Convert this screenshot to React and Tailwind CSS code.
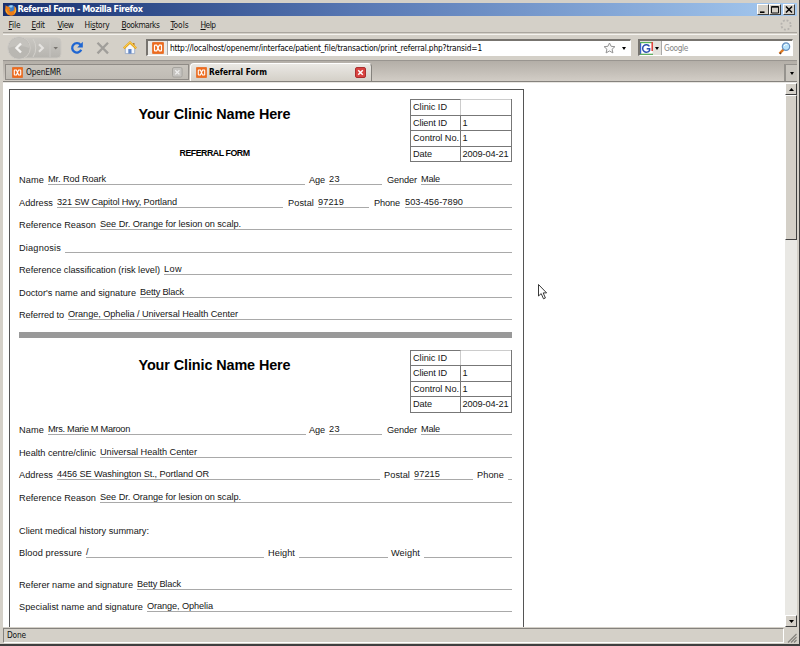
import React, { useLayoutEffect, useRef, useState } from "react";

// Spreads the letters of a text so that it takes the given width.
function Fit({ w, children, className = "" }) {
  const ref = useRef(null);
  const [spacing, setSpacing] = useState(0);
  useLayoutEffect(() => {
    const width = ref.current.getBoundingClientRect().width;
    const count = ref.current.textContent.length;
    setSpacing((w - width) / count);
  }, [w]);
  return (
    <span ref={ref} style={{ letterSpacing: spacing + "px" }} className={"inline-block shrink-0 whitespace-pre " + className}>
      {children}
    </span>
  );
}

function Firefox() {
  return (
    <svg width="12" height="12" viewBox="0 0 12 12" className="shrink-0">
      <circle cx="6" cy="6" r="5" fill="#3f7fc8" />
      <path d="M4 2.2Q6 0.6 8 1.8L7 3.6 5 3.4z" fill="#9ed0f2" />
      <path d="M0.6 1.2L2.4 2.6 5 3.2 4.2 4.6 5.6 5.4 4.2 6.4Q6 8.6 8.4 6.8 10 5 9 2L10.8 3.6Q12.4 7.6 9.6 10.4 6.2 13 2.4 10.6-0.6 8 0.3 4.4z" fill="#ee7d16" />
      <path d="M10 3.2Q12 7 9.2 10 11 5.8 10 3.2z" fill="#ffd447" />
      <path d="M1.3 5Q1.2 8.6 4.6 10.3 1.4 9.8 0.8 6.6z" fill="#ffc13b" />
    </svg>
  );
}

function Xampp({ s = 12 }) {
  return (
    <svg width={s} height={s} viewBox="0 0 12 12" className="shrink-0">
      <rect x="0.3" y="0.3" width="11.4" height="11.4" rx="1" fill="#ee6b1d" stroke="#e0621a" strokeWidth="0.6" />
      <path d="M6 6L4.8 3.2H3Q2.5 3.2 2.5 3.8V8.2Q2.5 8.8 3 8.8H4.8L7.2 3.2H9Q9.5 3.2 9.5 3.8V8.2Q9.5 8.8 9 8.8H7.2z" fill="none" stroke="#fff" strokeWidth="1.2" strokeLinejoin="round" />
    </svg>
  );
}

function Tri({ up, w = 5, className = "" }) {
  return (
    <svg width={w} height="3" viewBox="0 0 5 3" preserveAspectRatio="none" className={"shrink-0 " + className}>
      <path d={up ? "M0 3L2.5 0 5 3z" : "M0 0H5L2.5 3z"} fill="currentColor" />
    </svg>
  );
}

function WinButton({ children, className = "" }) {
  return (
    <div className={"flex w-3 shrink-0 items-center justify-center border border-t-white border-l-white border-r-[#404040] border-b-[#404040] bg-[#d4d0c8] " + className}>
      {children}
    </div>
  );
}

function TitleBar() {
  return (
    <div className="flex h-[13px] shrink-0 items-center bg-gradient-to-r from-[#183070] via-[#5878b4] via-45% to-[#a6caf0] pl-[1.5px] pr-[2px] font-[DejaVu_Sans_Condensed,'DejaVu_Sans',sans-serif] text-[9px] font-bold leading-[13px] text-white">
      <Firefox />
      <Fit w={125} className="ml-[1px]">Referral Form - Mozilla Firefox</Fit>
      <div className="flex-1" />
      <WinButton className="h-[11px]">
        <svg width="10" height="9"><path d="M2 7.2H6.5" stroke="#000" strokeWidth="1.6" /></svg>
      </WinButton>
      <WinButton className="h-[11px]">
        <svg width="10" height="9"><path d="M1.5 1.5H8.5V8H1.5zM1.5 2.2H8.5" stroke="#111" fill="none" /></svg>
      </WinButton>
      <WinButton className="ml-[2px] h-[11px]">
        <svg width="10" height="9"><path d="M2 1.5L8 7.5M8 1.5L2 7.5" stroke="#000" strokeWidth="1.5" /></svg>
      </WinButton>
    </div>
  );
}

const menus = [
  ["", "F", "ile", 12, "w-[23px]"],
  ["", "E", "dit", 13, "w-[26px]"],
  ["", "V", "iew", 16, "w-[27px]"],
  ["Hi", "s", "tory", 25, "w-[37px]"],
  ["", "B", "ookmarks", 38, "w-[49px]"],
  ["", "T", "ools", 18, "w-[30px]"],
  ["", "H", "elp", 15, "w-[20px]"],
];

function MenuBar() {
  return (
    <div className="flex h-[17px] shrink-0 items-center border-b border-[#aaa69f] pl-[5.5px] pr-[5px] pt-[2px]">
      {menus.map(([a, u, b, w, cls]) => (
        <div key={u + b} className={"shrink-0 leading-[14px] " + cls}>
          <Fit w={w}>{a}<u className="decoration-[0.7px] underline-offset-1">{u}</u>{b}</Fit>
        </div>
      ))}
      <div className="flex-1" />
      <svg width="12" height="12" viewBox="0 0 12 12">
        <circle cx="6" cy="6" r="4.7" fill="none" stroke="#b5b2ae" strokeWidth="1.8" strokeDasharray="1.9 1.79" />
      </svg>
    </div>
  );
}

function NavBar() {
  return (
    <div className="flex h-[27px] shrink-0 items-center border-t border-b border-t-[#f4f2ee] border-b-[#999590] pl-[2px] pr-[4px]">
      <svg width="57" height="24" viewBox="0 0 57 24" className="shrink-0">
        <defs>
          <linearGradient id="nav" x2="0" y2="1"><stop stopColor="#c9c7c2" /><stop offset="1" stopColor="#b6b4af" /></linearGradient>
        </defs>
        <rect x="8" y="2" width="48" height="20" rx="4" fill="url(#nav)" stroke="#cbc8c2" />
        <path d="M45 3V21" stroke="#c9c7c3" />
        <path d="M28 3A16 16 0 0 1 28 21" stroke="#d3d1cc" fill="none" />
        <circle cx="14" cy="12" r="11.3" fill="#b9b7b2" stroke="#d0cdc8" />
        <path d="M3.5 12A10.5 10.5 0 0 1 24.5 12Q14 8 3.5 12" fill="#c4c2bd" />
        <path d="M16 7.5L11.5 12 16 16.5" fill="none" stroke="#f3f2f0" strokeWidth="2.4" />
        <path d="M34 8.2L37.8 12 34 15.8" fill="none" stroke="#e6e4e1" strokeWidth="2.2" />
        <path d="M48.5 11H53L50.7 13.6z" fill="#77746f" />
      </svg>
      <svg width="14" height="14" viewBox="0 0 14 14" className="ml-[8px] shrink-0">
        <path d="M10.6 4A4.7 4.7 0 1 0 11.2 8.8" fill="none" stroke="#1f66d2" strokeWidth="2.3" />
        <path d="M12.8 0.8V6.4H7.2z" fill="#1f66d2" />
      </svg>
      <svg width="14" height="14" viewBox="0 0 14 14" className="ml-[12px] shrink-0">
        <path d="M1.5 1.8L12 12.4M12 1.8L1.5 12.4" stroke="#a09e9a" strokeWidth="2.3" />
      </svg>
      <svg width="14" height="14" viewBox="0 0 14 14" className="ml-[13px] shrink-0">
        <path d="M2.3 6.6L7 2.3 11.7 6.6V12.6H2.3z" fill="#f4f7fc" stroke="#91a4c5" strokeWidth="0.8" />
        <path d="M10 2H11.5V5H10z" fill="#b17a31" />
        <path d="M0.8 7.4L7 1.5 13.2 7.4" fill="none" stroke="#e7a51e" strokeWidth="2.2" />
        <path d="M1 6.8L7 1.2 13 6.8" fill="none" stroke="#ffdc60" strokeWidth="0.8" />
        <path d="M5.3 8H8.5V12.6H5.3z" fill="#6287c6" />
      </svg>
      <div className="ml-[9px] flex h-[17px] w-[485px] shrink-0 items-center border border-t-2 border-l-2 border-t-[#77746f] border-l-[#77746f] border-b-white border-r-white bg-white">
        <div className="flex h-full w-[20px] shrink-0 items-center justify-center border-r border-[#aaa] bg-[#eceae6]"><Xampp /></div>
        <Fit w={312} className="ml-[2px] text-black">http://localhost/openemr/interface/patient_file/transaction/print_referral.php?transid=1</Fit>
        <div className="flex-1" />
        <svg width="13" height="12" viewBox="0 0 13 12">
          <path d="M6.5 1L8.1 4.3 11.9 4.7 9.1 7.2 9.9 10.9 6.5 9 3.1 10.9 3.9 7.2 1.1 4.7 4.9 4.3z" fill="#fafafa" stroke="#929292" />
        </svg>
        <Tri w={4} className="ml-[6px] mr-[4px] text-black" />
      </div>
      <div className="ml-[7px] flex h-[17px] w-[155px] shrink-0 items-center border border-t-2 border-l-2 border-t-[#77746f] border-l-[#77746f] border-b-white border-r-white bg-white">
        <div className="flex h-full w-[22px] shrink-0 items-center border-r border-[#aaa] bg-[#e4e2dd]">
          <svg width="13" height="13" viewBox="0 0 13 13" className="shrink-0">
            <path d="M0.5 0.5H12.5V12.5H0.5z" fill="#fff" />
            <path d="M0.5 12V0.5" stroke="#3a62c9" strokeWidth="1.4" />
            <path d="M0 0.6H12" stroke="#57b35a" strokeWidth="1.2" />
            <path d="M12.2 0V9" stroke="#e03c35" strokeWidth="1.5" />
            <path d="M0 12.3H13" stroke="#52a854" strokeWidth="1.2" />
            <path d="M9.4 4.4A3.7 3.7 0 1 0 9.6 8.3V6.8H6.7" fill="none" stroke="#2b4fb0" strokeWidth="1.5" />
          </svg>
          <Tri w={4} className="ml-[2px] text-black" />
        </div>
        <Fit w={24} className="ml-[2px] text-[#858585]">Google</Fit>
        <div className="flex-1" />
        <svg width="13" height="13" viewBox="0 0 13 13" className="mr-[1px]">
          <path d="M5.4 7.6L1.5 11.5" stroke="#e17a20" strokeWidth="2.4" />
          <path d="M1.8 12L3 10.8" stroke="#65402a" strokeWidth="1.6" />
          <circle cx="8" cy="4.6" r="3.7" fill="#b9e3fb" stroke="#6790c0" strokeWidth="1.2" />
          <path d="M6 4Q7 2.2 9 2.6" stroke="#fff" fill="none" />
        </svg>
      </div>
    </div>
  );
}

function TabBar() {
  return (
    <div className="flex h-[21px] shrink-0 items-end border-b border-[#85827d] bg-gradient-to-b from-[#b3aea7] to-[#d2cdc6] pl-[2px]">
      <div className="mb-[1px] flex h-[16px] w-[184px] shrink-0 items-center border border-[#8f8b86] bg-gradient-to-b from-[#c9c5be] to-[#bfbbb4] pl-[6px] pr-[5px]">
        <Xampp s={11} />
        <Fit w={35} className="ml-[3px]">OpenEMR</Fit>
        <div className="flex-1" />
        <svg width="11" height="11" viewBox="0 0 11 11">
          <rect x="0.5" y="0.5" width="9.6" height="9.6" rx="1.5" fill="#c5c3bf" stroke="#a6a49f" />
          <path d="M3.2 3.2L7.4 7.4M7.4 3.2L3.2 7.4" stroke="#eee" strokeWidth="1.3" />
        </svg>
      </div>
      <div className="ml-[1px] flex h-[18px] w-[182px] shrink-0 items-center rounded-t-sm border border-b-0 border-t-white border-l-white border-r-[#85827d] bg-gradient-to-b from-[#eae8e4] to-[#d4d0c8] pl-[5px] pr-[5px]">
        <Xampp s={11} />
        <Fit w={58} className="ml-[2px] font-bold text-black">Referral Form</Fit>
        <div className="flex-1" />
        <svg width="11" height="11" viewBox="0 0 11 11">
          <rect x="0.5" y="0.5" width="10" height="10" rx="1.5" fill="#d84340" stroke="#a92f30" />
          <path d="M3.2 3.2L7.8 7.8M7.8 3.2L3.2 7.8" stroke="#fff" strokeWidth="1.5" />
        </svg>
      </div>
      <div className="flex-1" />
      <div className="flex h-[17px] w-[13px] items-center justify-center border-l-2 border-t border-[#96938e] bg-[#c9c5be] text-black"><Tri w={4} /></div>
    </div>
  );
}

// A label followed by its underlined value; the width classes cover label and value line.
function Field({ label, lw, labelBox, value, vw, line }) {
  return (
    <>
      <div className={"shrink-0 leading-[10px] " + labelBox}><Fit w={lw}>{label}</Fit></div>
      <div className={"h-[13px] shrink-0 border-b border-[#a9a9a9] leading-[14px] " + line}>
        {value && <Fit w={vw}>{value}</Fit>}
      </div>
    </>
  );
}

function Row({ children, className = "" }) {
  return <div className={"flex h-[22.5px] shrink-0 items-end " + className}>{children}</div>;
}

const ids = [["Clinic ID", 34, "", 0], ["Client ID", 34, "1", 4], ["Control No.", 46, "1", 4], ["Date", 19, "2009-04-21", 46]];

function Header({ subtitle, className }) {
  return (
    <div className={"flex shrink-0 " + className}>
      <div className="flex w-[391px] flex-col items-center text-black">
        <div className="mt-[7px] text-[14.4px] font-bold leading-[17px]"><Fit w={152}>Your Clinic Name Here</Fit></div>
        {subtitle && <div className="mt-[24px] text-[8.8px] font-bold leading-[13px]"><Fit w={70}>{subtitle}</Fit></div>}
      </div>
      <div className="h-[63px] w-[102px] border-b border-l border-r border-[#777]">
        {ids.map(([k, kw, v, vw], i) => (
          <div key={k} className="flex h-[15.5px]">
            <div className={"w-[50px] border-t border-[#777] pl-[2px] leading-[15px] " + (i ? "border-r" : "border-r border-r-[#ccc]")}><Fit w={kw}>{k}</Fit></div>
            <div className={"w-[50px] border-t pl-[1.5px] leading-[15px] " + (i ? "border-[#777]" : "border-[#ccc]")}>{v && <Fit w={vw}>{v}</Fit>}</div>
          </div>
        ))}
      </div>
    </div>
  );
}

function Form() {
  return (
    <div className="ml-[6px] mt-[6px] flex h-[560px] w-[515px] shrink-0 flex-col border border-[#555] pl-[9px] font-['Liberation_Sans',Arial,sans-serif] text-[9.2px] text-[#151515]">
      <Header subtitle="REFERRAL FORM" className="mt-[9px] h-[63.5px]" />
      <Row>
        <Field label="Name" lw={25} labelBox="w-[29px]" value="Mr. Rod Roark" vw={58} line="w-[257px]" />
        <Field label="Age" lw={16} labelBox="ml-[4px] w-[20px]" value="23" vw={11} line="w-[53px]" />
        <Field label="Gender" lw={30} labelBox="ml-[5px] w-[34px]" value="Male" vw={19} line="w-[91px]" />
      </Row>
      <Row>
        <Field label="Address" lw={34} labelBox="w-[38px]" value="321 SW Capitol Hwy, Portland" vw={120} line="w-[226px]" />
        <Field label="Postal" lw={26} labelBox="ml-[5px] w-[30px]" value="97219" vw={26} line="w-[51px]" />
        <Field label="Phone" lw={26} labelBox="ml-[5px] w-[31px]" value="503-456-7890" vw={58} line="w-[107px]" />
      </Row>
      <Row><Field label="Reference Reason" lw={77} labelBox="w-[81px]" value="See Dr. Orange for lesion on scalp." vw={141} line="w-[412px]" /></Row>
      <Row><Field label="Diagnosis" lw={42} labelBox="w-[46px]" line="w-[447px]" /></Row>
      <Row><Field label="Reference classification (risk level)" lw={141} labelBox="w-[145px]" value="Low" vw={18} line="w-[348px]" /></Row>
      <Row><Field label="Doctor's name and signature" lw={117} labelBox="w-[121px]" value="Betty Black" vw={44} line="w-[372px]" /></Row>
      <Row><Field label="Referred to" lw={45} labelBox="w-[49px]" value="Orange, Ophelia / Universal Health Center" vw={170} line="w-[444px]" /></Row>
      <div className="mt-[12px] h-[5.5px] w-[493px] shrink-0 bg-[#999]" />
      <Header className="mt-[12px] h-[63px]" />
      <Row>
        <Field label="Name" lw={25} labelBox="w-[29px]" value="Mrs. Marie M Maroon" vw={82} line="w-[258px]" />
        <Field label="Age" lw={16} labelBox="ml-[3px] w-[20px]" value="23" vw={11} line="w-[53px]" />
        <Field label="Gender" lw={30} labelBox="ml-[5px] w-[34px]" value="Male" vw={19} line="w-[91px]" />
      </Row>
      <Row><Field label="Health centre/clinic" lw={77} labelBox="w-[81px]" value="Universal Health Center" vw={97} line="w-[412px]" /></Row>
      <Row>
        <Field label="Address" lw={34} labelBox="w-[38px]" value="4456 SE Washington St., Portland OR" vw={152} line="w-[323px]" />
        <Field label="Postal" lw={26} labelBox="ml-[4px] w-[30px]" value="97215" vw={26} line="w-[59px]" />
        <Field label="Phone" lw={27} labelBox="ml-[4px] w-[31px]" line="w-[4px]" />
      </Row>
      <Row><Field label="Reference Reason" lw={77} labelBox="w-[81px]" value="See Dr. Orange for lesion on scalp." vw={141} line="w-[412px]" /></Row>
      <div className="mt-[23px] h-[10px] shrink-0 leading-[10px]"><Fit w={130}>Client medical history summary:</Fit></div>
      <Row>
        <Field label="Blood pressure" lw={63} labelBox="w-[67px]" value="/" vw={3} line="w-[178px]" />
        <Field label="Height" lw={27} labelBox="ml-[4px] w-[31px]" line="w-[89px]" />
        <Field label="Weight" lw={29} labelBox="ml-[3px] w-[33px]" line="w-[88px]" />
      </Row>
      <Row className="mt-[9px]"><Field label="Referer name and signature" lw={114} labelBox="w-[118px]" value="Betty Black" vw={44} line="w-[375px]" /></Row>
      <Row><Field label="Specialist name and signature" lw={124} labelBox="w-[128px]" value="Orange, Ophelia" vw={66} line="w-[365px]" /></Row>
    </div>
  );
}

function ScrollBar() {
  return (
    <div className="flex w-[12px] shrink-0 flex-col bg-[#e9e8e4] text-black">
      <WinButton className="h-[12px]"><Tri up /></WinButton>
      <div className="h-[145px] border border-t-white border-l-white border-r-[#404040] border-b-[#404040] bg-[#d4d0c8]" />
      <div className="flex-1" />
      <WinButton className="h-[12px]"><Tri /></WinButton>
    </div>
  );
}

export default function App() {
  return (
    <div className="relative flex h-[646px] w-[800px] flex-col overflow-hidden border-r border-b-2 border-[#404040] bg-[#d4d0c8] pl-[3px] pr-[2px] pt-[3px] font-[DejaVu_Sans_Condensed,'DejaVu_Sans',sans-serif] text-[8.3px] text-[#111]">
      <TitleBar />
      <MenuBar />
      <div className="h-[1px] shrink-0" />
      <NavBar />
      <TabBar />
      <div className="flex h-[545px] shrink-0 border-t border-[#e8e6e2] bg-white">
        <div className="flex h-full min-w-0 flex-1 flex-col overflow-hidden"><Form /></div>
        <ScrollBar />
      </div>
      <div className="flex h-[16px] shrink-0 items-center">
        <div className="flex h-[15px] w-[781px] items-center border border-t-[#85827d] border-l-[#85827d] border-b-white border-r-white pl-[3px] pt-[1px]"><Fit w={19}>Done</Fit></div>
        <div className="flex-1" />
        <svg width="10" height="10" viewBox="0 0 10 10" className="self-end">
          <path d="M1 9.5L9.5 1M4 9.5L9.5 4M7 9.5L9.5 7" stroke="#85827d" strokeWidth="1.2" />
        </svg>
      </div>
      <svg width="11" height="18" viewBox="0 0 11 18" className="absolute left-[537px] top-[283px]">
        <path d="M1.5 1.5V13L4.2 10.6 6.5 15.8 8.4 15 6.2 9.9H9.6z" fill="#fff" stroke="#222" strokeWidth="0.9" />
      </svg>
    </div>
  );
}
